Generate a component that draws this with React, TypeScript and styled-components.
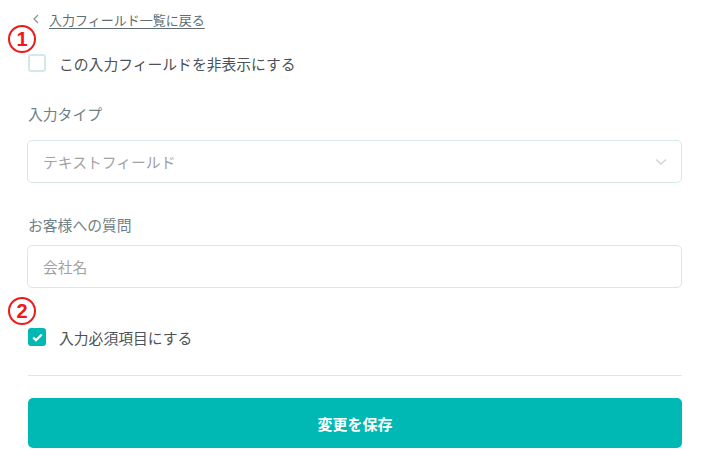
import styled, { createGlobalStyle } from "styled-components";

const GlobalStyle = createGlobalStyle`
body {
  margin: 0;
  background: #ffffff;
  font-family: "Open Sans", "Noto Sans CJK JP", sans-serif;
}
`;

const Page = styled.div`
position: relative;
width: 702px;
height: 466px;
box-sizing: border-box;
padding: 8px 20px 0 27px;
display: flex;
flex-direction: column;
`;

const BackRow = styled.a`
height: 22px;
display: flex;
align-items: center;
gap: 10px;
padding-left: 6px;
color: #5d6d72;
font-size: 13px;
text-decoration: none;
span {
  text-decoration: underline;
  text-underline-offset: 3px;
}
`;

const Marker = styled.div<{ $top: number }>`
position: absolute;
left: 8px;
top: ${(p) => p.$top}px;
width: 24px;
height: 24px;
border: 2.8px solid #f01818;
border-radius: 50%;
color: #f01818;
font-family: "Liberation Sans", sans-serif;
font-weight: bold;
font-size: 20px;
line-height: 24px;
text-align: center;
`;

const CheckRow = styled.label<{ $mt: number }>`
display: flex;
align-items: center;
gap: 13px;
margin-top: ${(p) => p.$mt}px;
margin-left: 1px;
height: 18px;
color: #4c5256;
font-size: 14.8px;
`;

const Box = styled.span<{ $checked?: boolean }>`
width: 18px;
height: 18px;
box-sizing: border-box;
border-radius: 3px;
border: ${(p) => (p.$checked ? "none" : "2px solid #d3e8e7")};
background: ${(p) => (p.$checked ? "#00b9b4" : "#ffffff")};
display: flex;
align-items: center;
justify-content: center;
`;

const Label = styled.div<{ $mt: number; $mb: number }>`
margin-top: ${(p) => p.$mt}px;
margin-bottom: ${(p) => p.$mb}px;
margin-left: 1px;
height: 20px;
line-height: 20px;
color: #6f7f86;
font-size: 14.8px;
`;

const Field = styled.div`
height: 43px;
box-sizing: border-box;
border: 1px solid #d6e9e8;
border-radius: 5px;
display: flex;
align-items: center;
justify-content: space-between;
padding: 0 14px 0 15px;
color: #a2a2a2;
font-size: 14.8px;
`;

const Divider = styled.hr`
margin: 0;
margin-top: 29px;
margin-left: 1px;
border: none;
border-top: 1px solid #e4e4e4;
`;

const SaveButton = styled.button`
margin-top: 22px;
margin-left: 1px;
height: 50px;
border: none;
border-radius: 5px;
background: #00b9b4;
color: #ffffff;
font-family: "Open Sans", "Noto Sans CJK JP", sans-serif;
font-size: 15px;
font-weight: bold;
`;

export default function App() {
  return (
    <>
      <GlobalStyle />
      <Page>
        <BackRow href="#">
          <svg width="6" height="10" viewBox="0 0 6 10">
            <path d="M5 1 L1 5 L5 9" fill="none" stroke="#8a979c" strokeWidth="1.3" />
          </svg>
          <span>入力フィールド一覧に戻る</span>
        </BackRow>
        <Marker $top={25}>1</Marker>
        <CheckRow $mt={24}>
          <Box />
          この入力フィールドを非表示にする
        </CheckRow>
        <Label $mt={32} $mb={16}>入力タイプ</Label>
        <Field>
          テキストフィールド
          <svg width="12" height="8" viewBox="0 0 12 8">
            <path d="M1 1.5 L6 6 L11 1.5" fill="none" stroke="#d4d4d4" strokeWidth="1.6" />
          </svg>
        </Field>
        <Label $mt={32} $mb={10}>お客様への質問</Label>
        <Field>会社名</Field>
        <Marker $top={297}>2</Marker>
        <CheckRow $mt={40}>
          <Box $checked>
            <svg width="11" height="9" viewBox="0 0 11 9">
              <path d="M1.2 4.6 L4 7.3 L9.8 1.5" fill="none" stroke="#ffffff" strokeWidth="2.2" />
            </svg>
          </Box>
          入力必須項目にする
        </CheckRow>
        <Divider />
        <SaveButton>変更を保存</SaveButton>
      </Page>
    </>
  );
}
